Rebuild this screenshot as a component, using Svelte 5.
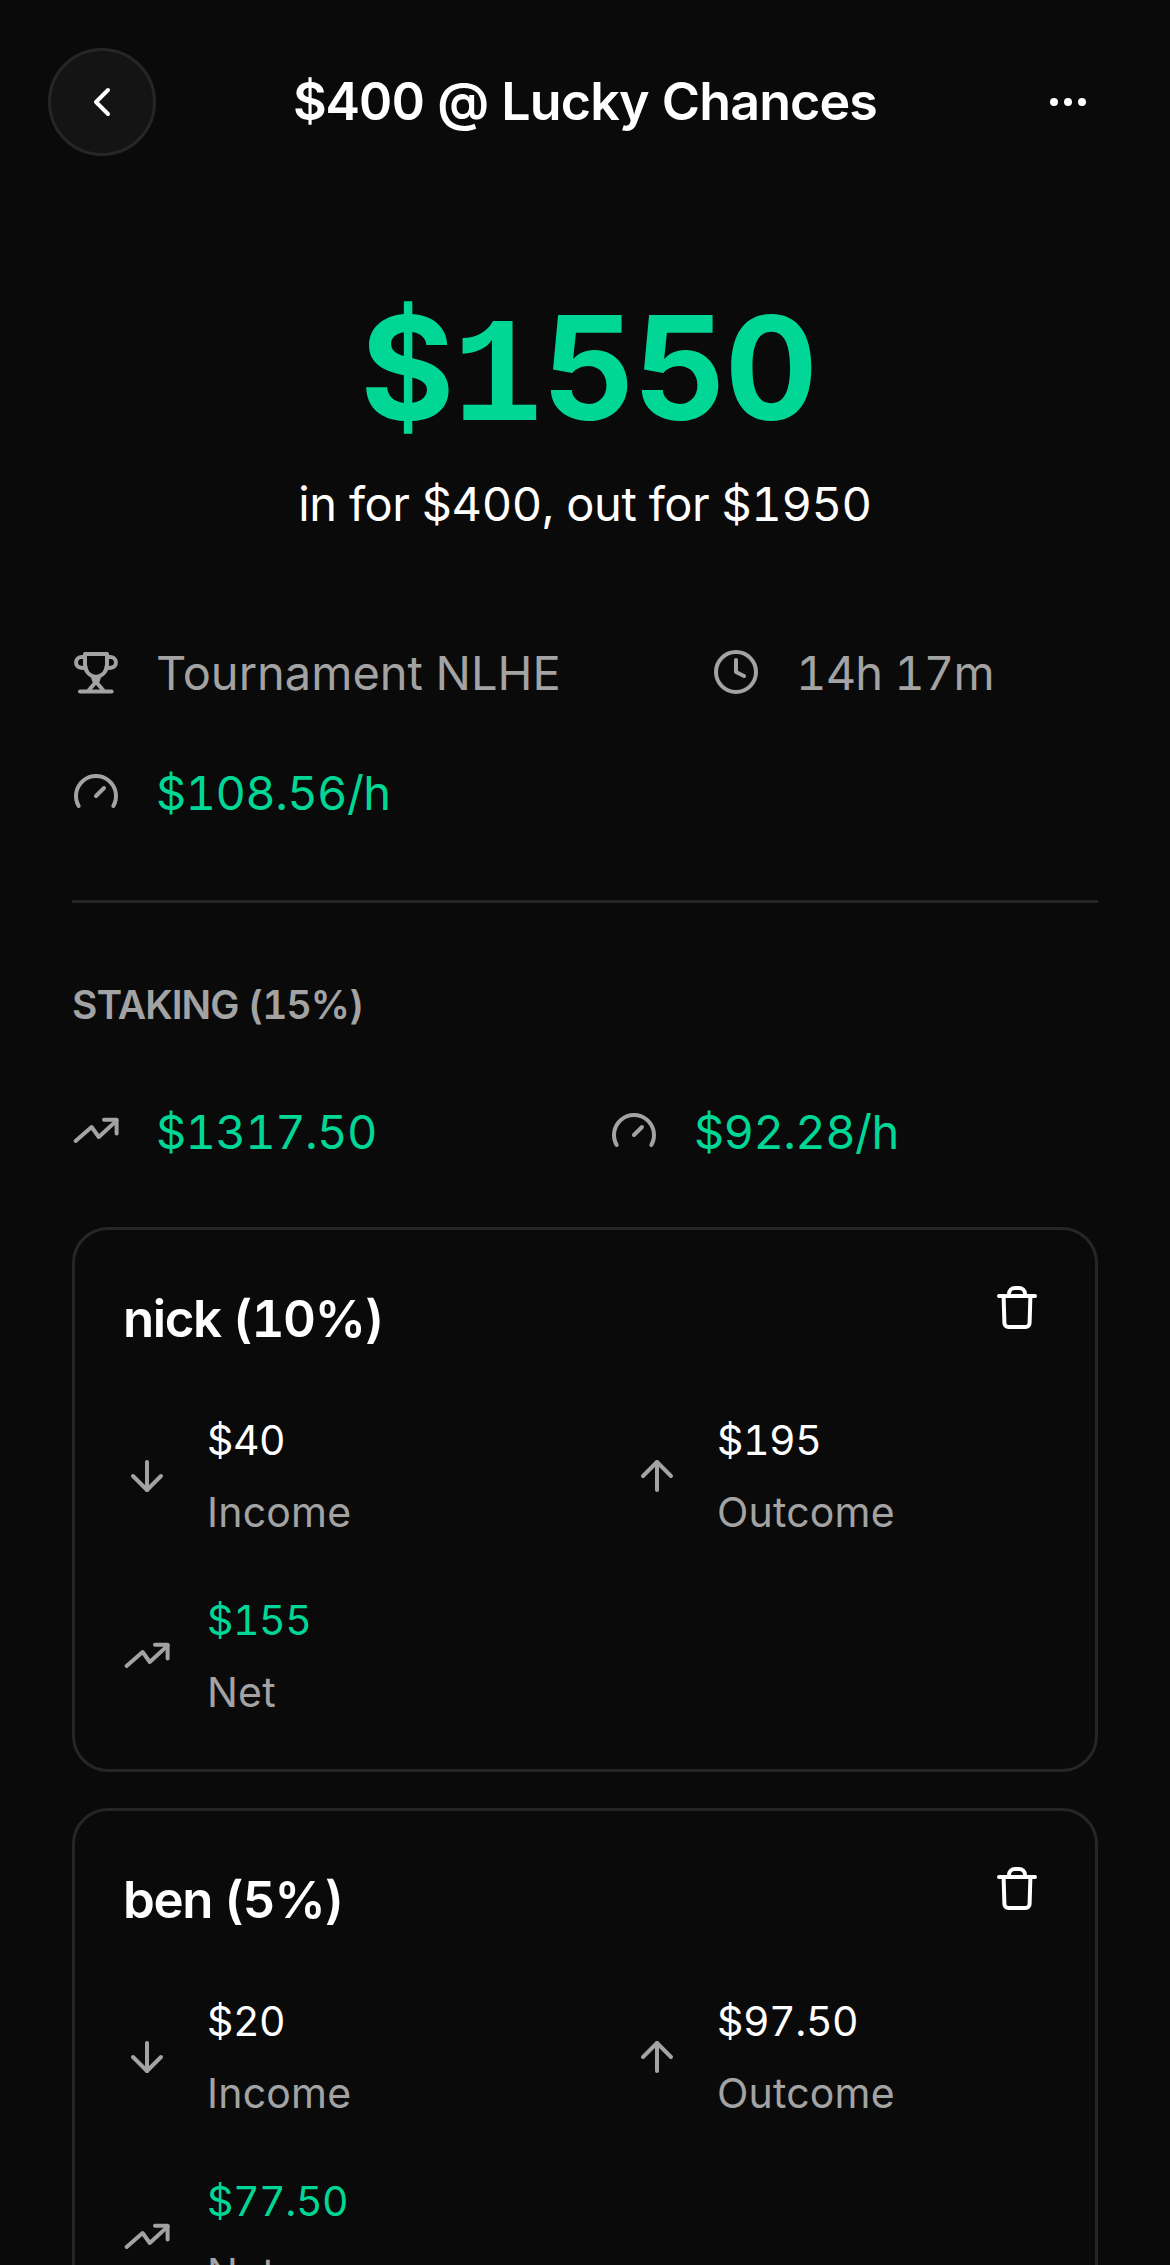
<script>
  const stakers = [
    { name: "nick (10%)", income: "$40", outcome: "$195", net: "$155" },
    { name: "ben (5%)", income: "$20", outcome: "$97.50", net: "$77.50" },
  ];
</script>

{#snippet icon(kind)}
  <svg class="icon" viewBox="0 0 24 24" fill="none" stroke="currentColor" stroke-width="2" stroke-linecap="round" stroke-linejoin="round">
    {#if kind === "chevron"}
      <path d="m15 18-6-6 6-6" />
    {:else if kind === "dots"}
      <circle cx="12" cy="12" r="1" /><circle cx="19" cy="12" r="1" /><circle cx="5" cy="12" r="1" />
    {:else if kind === "trophy"}
      <path d="M6.500 3h11v5c0 3.500-2 6-5.500 6.500C8.500 14 6.500 11.500 6.500 8z" />
      <path d="M6.500 4.500H5a2.700 2.700 0 0 0-.5 5.400l2.400.2" />
      <path d="M17.500 4.500H19a2.700 2.700 0 0 1 .5 5.400l-2.400.2" />
      <path d="m10.500 14.500 1 3-3 3.500M13.500 14.500l-1 3 3 3.500" />
      <path d="M4 21.800h15.800" />
    {:else if kind === "clock"}
      <circle cx="12" cy="12" r="10" /><path d="M12 6v6l4 2" />
    {:else if kind === "gauge"}
      <path d="m12 14 4-4" /><path d="M3.340 19a10 10 0 1 1 17.320 0" />
    {:else if kind === "trend"}
      <path d="M1.800 17l8-7 3.600 5 8.900-8.200" /><path d="M16 6.400h6.300v6.800" />
    {:else if kind === "down"}
      <path d="M12 5v14" /><path d="m19 12-7 7-7-7" />
    {:else if kind === "up"}
      <path d="M12 19V5" /><path d="m5 12 7-7 7 7" />
    {:else if kind === "trash"}
      <path d="M3 6h18" /><path d="m5.300 6 .4 13.500a2 2 0 0 0 2 2h8.600a2 2 0 0 0 2-2L18.700 6" /><path d="M8 6V5a3 3 0 0 1 3-3h2a3 3 0 0 1 3 3v1" />
    {/if}
  </svg>
{/snippet}

{#snippet stat(kind, value, label, gain)}
  <div class="stat">
    <span class="stat-icon">{@render icon(kind)}</span>
    <div>
      <div class="stat-value" class:gain>{value}</div>
      <div class="stat-label">{label}</div>
    </div>
  </div>
{/snippet}

<main class="page">
  <header class="topbar">
    <button class="round back" aria-label="Back">{@render icon("chevron")}</button>
    <h1>$400 @ Lucky Chances</h1>
    <button class="round more" aria-label="More">{@render icon("dots")}</button>
  </header>

  <section class="hero">
    <div class="amount">$<span class="footed">1</span>550</div>
    <p>in for $400, out for $1950</p>
  </section>

  <section class="content">
    <div class="meta">
      <div class="meta-item">{@render icon("trophy")}<span>Tournament NLHE</span></div>
      <div class="meta-item">{@render icon("clock")}<span class="duration">14h 17m</span></div>
      <div class="meta-item gain">{@render icon("gauge")}<span>$108.56/h</span></div>
    </div>

    <hr />

    <h2>STAKING (15%)</h2>

    <div class="meta staking">
      <div class="meta-item gain">{@render icon("trend")}<span>$1317.50</span></div>
      <div class="meta-item gain">{@render icon("gauge")}<span>$92.28/h</span></div>
    </div>

    {#each stakers as s}
      <article class="card">
        <div class="card-head">
          <h3>{s.name}</h3>
          <button class="trash" aria-label="Delete">{@render icon("trash")}</button>
        </div>
        <div class="stats">
          {@render stat("down", s.income, "Income", false)}
          {@render stat("up", s.outcome, "Outcome", false)}
          {@render stat("trend", s.net, "Net", true)}
        </div>
      </article>
    {/each}
  </section>
</main>

<style>
  :global(body) {
    background: #0a0a0a;
    overflow: hidden;
  }

  .page {
    height: 2265px;
    overflow: hidden;
    background: #0a0a0a;
    color: #fff;
    font-family: Inter, "Liberation Sans", sans-serif;
    font-variant-numeric: tabular-nums;
  }

  .icon {
    display: block;
    width: 48px;
    height: 48px;
    flex: none;
  }

  .topbar {
    display: flex;
    align-items: center;
    justify-content: space-between;
    padding: 48px 48px 0;
  }

  .topbar h1 {
    margin: 0;
    font-size: 52px;
    line-height: 58px;
    font-weight: 600;
    letter-spacing: -0.9px;
  }

  .round {
    display: flex;
    align-items: center;
    justify-content: center;
    width: 108px;
    height: 108px;
    padding: 0;
    border-radius: 50%;
    color: #fff;
    background: none;
    border: 3px solid transparent;
  }

  .back {
    background: #141414;
    border-color: #262626;
  }

  .hero {
    margin-top: 128px;
    text-align: center;
  }

  .amount {
    padding-left: 6px;
    font-size: 144px;
    line-height: 168px;
    font-weight: 700;
    letter-spacing: -2px;
    color: #00d796;
  }

  .footed {
    font-family: "Liberation Mono", monospace;
    font-size: 150px;
    letter-spacing: 0;
  }

  .hero p {
    margin: 4px 0 0;
    font-size: 47px;
    line-height: 72px;
    font-weight: 400;
    letter-spacing: -0.4px;
  }

  .content {
    padding: 0 72px;
  }

  .meta {
    display: grid;
    grid-template-columns: 640px 1fr;
    row-gap: 48px;
    margin-top: 96px;
    color: #a3a3a3;
  }

  .staking {
    grid-template-columns: 538px 1fr;
    margin-top: 60px;
  }

  .meta-item {
    display: flex;
    align-items: center;
    gap: 36px;
    height: 72px;
    font-size: 47px;
  }

  .meta-item.gain {
    letter-spacing: -0.6px;
  }

  .meta-item .icon {
    color: #a3a3a3;
  }

  .duration {
    letter-spacing: -0.8px;
  }

  .gain {
    color: #00d796;
  }

  hr {
    height: 3px;
    margin: 72px 0 0;
    border: 0;
    background: #262626;
  }

  h2 {
    margin: 72px 0 0;
    font-size: 39px;
    line-height: 60px;
    font-weight: 600;
    letter-spacing: -0.95px;
    color: #a3a3a3;
  }

  .card {
    margin-top: 36px;
    padding: 48px 48px 41px;
    border: 3px solid #262626;
    border-radius: 36px;
  }

  .staking + .card {
    margin-top: 60px;
  }

  .card-head {
    display: flex;
    justify-content: space-between;
    align-items: flex-start;
    min-height: 72px;
  }

  h3 {
    margin: 5px 0 0;
    font-size: 51px;
    line-height: 72px;
    font-weight: 600;
    letter-spacing: -1.4px;
  }

  .trash {
    width: 60px;
    height: 60px;
    display: flex;
    align-items: center;
    justify-content: center;
    padding: 0;
    border: 0;
    background: none;
    color: #fff;
  }

  .stats {
    display: grid;
    grid-template-columns: 1fr 1fr;
    gap: 36px 96px;
    margin-top: 49px;
  }

  .stat {
    display: flex;
    align-items: center;
    gap: 36px;
  }

  .stat-icon {
    color: #a3a3a3;
  }

  .stat-value {
    font-size: 41px;
    line-height: 72px;
    letter-spacing: -0.4px;
  }

  .stat-label {
    font-size: 41px;
    line-height: 72px;
    letter-spacing: 0.2px;
    color: #a3a3a3;
  }
</style>
